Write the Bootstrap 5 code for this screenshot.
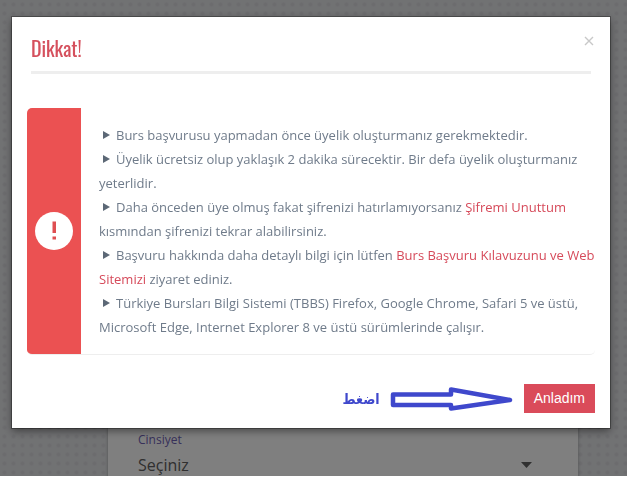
<!DOCTYPE html>
<html lang="tr">
<head>
<meta charset="utf-8">
<meta name="viewport" content="width=device-width, initial-scale=1">
<title>Dikkat!</title>
<link href="https://cdn.jsdelivr.net/npm/bootstrap@5.3.0/dist/css/bootstrap.min.css" rel="stylesheet">
<style>
  body { font-family: "Open Sans", "Noto Sans", sans-serif; background: #fff; }
  .page-bg {
    height: calc(100vh - 2px);
    overflow: hidden;
    padding: 100px 49px 0 108px;
    background: #e3e4e7 radial-gradient(circle, #d8d9dd 1px, transparent 3px) 0 0 / 9px 9px;
  }
  .form-panel { background: #fff; padding: 332px 30px 0; min-height: 100%; box-shadow: 0 0 3px rgba(0,0,0,.3); }
  .form-panel label { color: #6f62b4; font-size: 12px; line-height: 16px; margin-bottom: 3px; }
  .form-panel select {
    border: 0; padding: 0 30px 0 0; font-size: 16px; line-height: 24px; height: 28px;
    color: #606060; background-size: 11px 6px; background-position: right 16px center;
    background-image: url("data:image/svg+xml,%3Csvg xmlns='http://www.w3.org/2000/svg' viewBox='0 0 11 6'%3E%3Cpath d='M0 0h11L5.500 6z' fill='%23606060'/%3E%3C/svg%3E");
  }
  .notice-shade { background: rgba(0,0,0,.5); height: calc(100vh - 2px); }
  .notice-dialog { max-width: none; margin: 17px 17px 0 12px; }
  .notice-dialog .modal-content { border: 0; border-radius: 0; box-shadow: 0 0 0 1px rgba(0,0,0,.3), 0 3px 8px rgba(0,0,0,.45); }
  .notice-head { margin: 0 19px; padding: 17px 0 0; height: 57px; border-bottom: 3px solid #eee; }
  .notice-head h1 { font: 400 20px/28px "Oswald", "Liberation Sans Narrow", "Roboto Condensed", sans-serif; color: #d5505d; }
  .close-x { width: 18px; height: 18px; margin: -2px -7px 0 0; line-height: 0; }
  .notice-body { margin: 34px 15px 0; border-bottom: 1px solid #eee; border-radius: 5px; overflow: hidden; }
  .notice-side { width: 54px; background: #eb5152; }
  .notice-text { padding: 15px 0 15px 18px; font-size: 13px; line-height: 24px; color: #6f7b8a; }
  .notice-text a { color: #d64a5a; text-decoration: none; }
  .bullet { width: 7px; height: 8px; margin: 0 6px 3px 4px; }
  .notice-foot { padding: 29px 15px 15px; }
  .press-hint { font: 700 14px/24px "DejaVu Sans Condensed", "DejaVu Sans", sans-serif; color: #3f48cc; margin-right: 10px; }
  .press-arrow { margin-right: 11px; }
  .ok-btn { background: #da4b5a; color: #fff; border: 0; border-radius: 0; padding: 4px 10px; font: 14px/21px "Liberation Sans", Arial, sans-serif; }
</style>
</head>
<body>
<main class="page-bg">
  <form class="form-panel">
    <label for="gender" class="d-block">Cinsiyet</label>
    <select id="gender" class="form-select shadow-none"><option>Seçiniz</option></select>
  </form>
</main>
<div class="modal d-block notice-shade" role="dialog" aria-modal="true" aria-labelledby="noticeTitle">
  <div class="modal-dialog notice-dialog">
    <div class="modal-content">
      <header class="notice-head d-flex justify-content-between align-items-start">
        <h1 id="noticeTitle" class="m-0">Dikkat!</h1>
        <button type="button" class="btn p-0 border-0 close-x" aria-label="Kapat">
          <svg width="18" height="18" viewBox="0 0 18 18"><path d="M5 5l8 8M13 5l-8 8" stroke="#c8c8c8" stroke-width="1.400" fill="none"/></svg>
        </button>
      </header>
      <div class="notice-body d-flex">
        <div class="notice-side flex-shrink-0 d-flex align-items-center justify-content-center">
          <svg width="38" height="38" viewBox="0 0 38 38" aria-hidden="true"><circle cx="19" cy="19" r="19" fill="#fff"/><path d="M17.500 9.500h3.500v11.500h-3.500zM17.500 24.500h3.500v3h-3.500z" fill="#df4f52"/></svg>
        </div>
        <div class="notice-text flex-grow-1">
          <div><svg class="bullet" viewBox="0 0 7 8"><path d="M0 0l7 4L0 8z" fill="#5c6876"/></svg>Burs başvurusu yapmadan önce üyelik oluşturmanız gerekmektedir.</div>
          <div><svg class="bullet" viewBox="0 0 7 8"><path d="M0 0l7 4L0 8z" fill="#5c6876"/></svg>Üyelik ücretsiz olup yaklaşık 2 dakika sürecektir. Bir defa üyelik oluşturmanız yeterlidir.</div>
          <div><svg class="bullet" viewBox="0 0 7 8"><path d="M0 0l7 4L0 8z" fill="#5c6876"/></svg>Daha önceden üye olmuş fakat şifrenizi hatırlamıyorsanız <a href="#">Şifremi Unuttum</a> kısmından şifrenizi tekrar alabilirsiniz.</div>
          <div><svg class="bullet" viewBox="0 0 7 8"><path d="M0 0l7 4L0 8z" fill="#5c6876"/></svg>Başvuru hakkında daha detaylı bilgi için lütfen <a href="#">Burs Başvuru Kılavuzunu ve Web Sitemizi</a> ziyaret ediniz.</div>
          <div><svg class="bullet" viewBox="0 0 7 8"><path d="M0 0l7 4L0 8z" fill="#5c6876"/></svg>Türkiye Bursları Bilgi Sistemi (TBBS) Firefox, Google Chrome, Safari 5 ve üstü, Microsoft Edge, Internet Explorer 8 ve üstü sürümlerinde çalışır.</div>
        </div>
      </div>
      <footer class="notice-foot d-flex justify-content-end align-items-center">
        <span class="press-hint" lang="ar" dir="rtl">اضغط</span>
        <svg class="press-arrow" width="123" height="25" viewBox="0 0 123 25" aria-hidden="true"><path d="M3 8.500H61V3.500L120 14L61 22.500V19H3z" fill="#fff" stroke="#3f48cc" stroke-width="4.500" stroke-linejoin="round"/></svg>
        <button type="button" class="btn ok-btn">Anladım</button>
      </footer>
    </div>
  </div>
</div>
<script src="https://cdn.jsdelivr.net/npm/bootstrap@5.3.0/dist/js/bootstrap.bundle.min.js"></script>
</body>
</html>
